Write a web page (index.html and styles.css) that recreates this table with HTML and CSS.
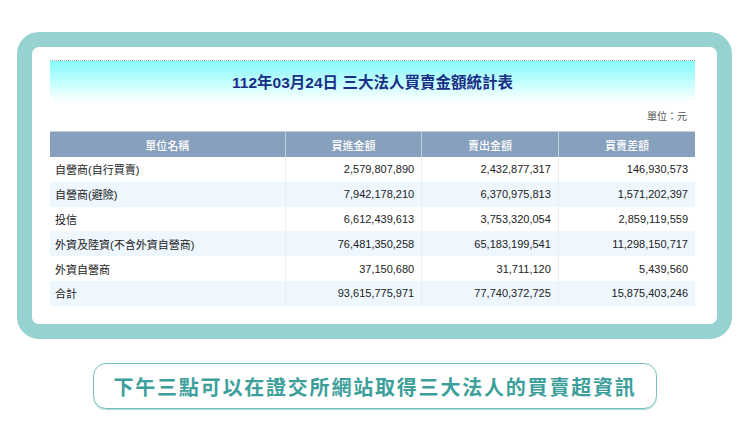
FILE: index.html
```html
<!DOCTYPE html>
<html lang="zh-Hant">
<head>
<meta charset="utf-8">
<title>三大法人買賣金額統計表</title>
<link rel="stylesheet" href="styles.css">
</head>
<body>
<div class="page">
  <div class="frame">
    <div class="sheet">
      <div class="title-band">
        <h1 class="title">112年03月24日 三大法人買賣金額統計表</h1>
      </div>
      <div class="unit">單位：元</div>
      <table class="stats">
        <colgroup>
          <col class="c-name"><col class="c-num"><col class="c-num"><col class="c-num">
        </colgroup>
        <thead>
          <tr><th>單位名稱</th><th>買進金額</th><th>賣出金額</th><th>買賣差額</th></tr>
        </thead>
        <tbody>
          <tr><td>自營商(自行買賣)</td><td>2,579,807,890</td><td>2,432,877,317</td><td>146,930,573</td></tr>
          <tr><td>自營商(避險)</td><td>7,942,178,210</td><td>6,370,975,813</td><td>1,571,202,397</td></tr>
          <tr><td>投信</td><td>6,612,439,613</td><td>3,753,320,054</td><td>2,859,119,559</td></tr>
          <tr><td>外資及陸資(不含外資自營商)</td><td>76,481,350,258</td><td>65,183,199,541</td><td>11,298,150,717</td></tr>
          <tr><td>外資自營商</td><td>37,150,680</td><td>31,711,120</td><td>5,439,560</td></tr>
          <tr><td>合計</td><td>93,615,775,971</td><td>77,740,372,725</td><td>15,875,403,246</td></tr>
        </tbody>
      </table>
    </div>
  </div>
  <div class="caption">下午三點可以在證交所網站取得三大法人的買賣超資訊</div>
</div>
</body>
</html>
```

FILE: styles.css
```css
html, body {
  margin: 0;
  padding: 0;
  background: #ffffff;
}

.page {
  width: 750px;
  height: 430px;
  padding-top: 32px;
  box-sizing: border-box;
  display: flex;
  flex-direction: column;
  align-items: center;
  font-family: "Liberation Sans", "Noto Sans CJK TC", sans-serif;
}

.frame {
  width: 715px;
  height: 307px;
  box-sizing: border-box;
  margin-left: -1px;
  border: 15px solid #96d2cf;
  border-radius: 22px;
  background: #ffffff;
}

.sheet {
  padding: 13px 22px 0 18px;
}

.title-band {
  height: 42px;
  box-sizing: border-box;
  border-top: 1px dotted #a8a8a8;
  background: linear-gradient(to bottom, #84fbfc 0%, #c6fdfd 55%, #ffffff 100%);
  display: flex;
  align-items: center;
  justify-content: center;
}

.title {
  margin: 0;
  padding-bottom: 1px;
  font-size: 15.5px;
  font-weight: bold;
  color: #1a2f86;
  letter-spacing: 0;
}

.unit {
  height: 29px;
  box-sizing: border-box;
  padding: 8px 8px 0 0;
  text-align: right;
  font-size: 10px;
  color: #555555;
  line-height: 14px;
}

.stats {
  width: 645px;
  border-collapse: collapse;
  table-layout: fixed;
  font-size: 11px;
  color: #222222;
}

.c-name { width: 235px; }
.c-num { width: 136.6px; }

.stats th {
  height: 25px;
  padding: 0;
  background: #87a0bd;
  color: #ffffff;
  font-size: 11px;
  font-weight: 500;
  text-align: center;
  border-top: 1px solid #c5cfdb;
  border-left: 1px solid #c3d0df;
}

.stats th:first-child { border-left: none; }

.stats td {
  height: 24.8px;
  padding: 0 7px 0 6px;
  text-align: right;
  border-left: 1px solid #eeeeee;
}

.stats td:first-child {
  text-align: left;
  padding-left: 5px;
  border-left: none;
}

.stats tbody tr:nth-child(even) td {
  background: #eef6fe;
}

.caption {
  margin-top: 24px;
  width: 564px;
  height: 46px;
  box-sizing: border-box;
  border: 1.5px solid #78c2bd;
  border-radius: 13px;
  box-shadow: 0 1px 0 #a9dad6;
  display: flex;
  align-items: center;
  justify-content: center;
  white-space: nowrap;
  font-family: "Noto Sans CJK TC", sans-serif;
  font-size: 20px;
  font-weight: bold;
  letter-spacing: 1.8px;
  color: #3c9f9b;
}
```
